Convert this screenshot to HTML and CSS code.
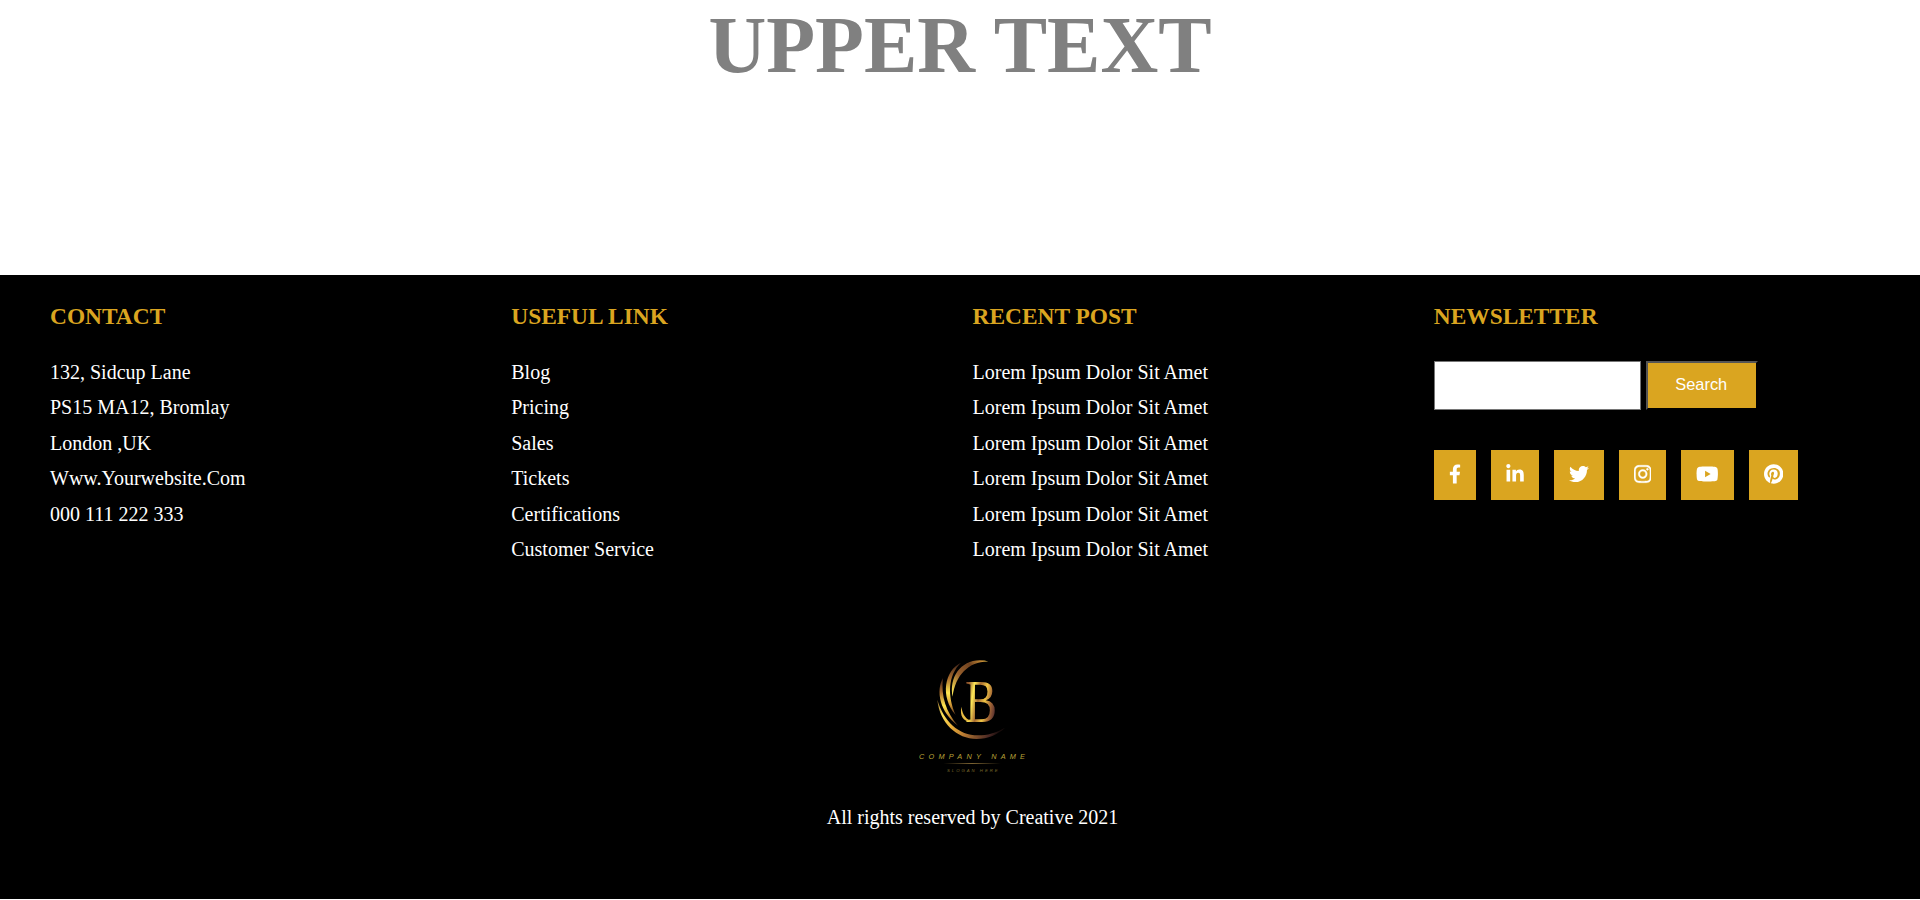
FILE: index.html
```html
<!DOCTYPE html>
<html lang="en">
<head>
<meta charset="utf-8">
<title>Footer</title>
<link rel="stylesheet" href="styles.css">
</head>
<body>
<header class="upper"><h1>UPPER TEXT</h1></header>
<footer class="footer">
  <div class="columns">
    <section class="column">
      <h3>CONTACT</h3>
      <ul>
        <li>132, Sidcup Lane</li>
        <li>PS15 MA12, Bromlay</li>
        <li>London ,UK</li>
        <li>Www.Yourwebsite.Com</li>
        <li>000 111 222 333</li>
      </ul>
    </section>
    <section class="column">
      <h3>USEFUL LINK</h3>
      <ul>
        <li>Blog</li>
        <li>Pricing</li>
        <li>Sales</li>
        <li>Tickets</li>
        <li>Certifications</li>
        <li>Customer Service</li>
      </ul>
    </section>
    <section class="column">
      <h3>RECENT POST</h3>
      <ul>
        <li>Lorem Ipsum Dolor Sit Amet</li>
        <li>Lorem Ipsum Dolor Sit Amet</li>
        <li>Lorem Ipsum Dolor Sit Amet</li>
        <li>Lorem Ipsum Dolor Sit Amet</li>
        <li>Lorem Ipsum Dolor Sit Amet</li>
        <li>Lorem Ipsum Dolor Sit Amet</li>
      </ul>
    </section>
    <section class="column">
      <h3>NEWSLETTER</h3>
      <form class="search">
        <input class="search-field" type="text" aria-label="Search">
        <button class="search-button" type="button">Search</button>
      </form>
      <div class="social">
        <a class="facebook"><svg viewBox="0 0 320 512"><path d="M279.14 288l14.22-92.66h-88.91v-60.13c0-25.35 12.42-50.06 52.24-50.06h40.42V6.26S260.43 0 225.36 0c-73.22 0-121.08 44.38-121.08 124.72v70.62H22.89V288h81.39v224h100.17V288z"/></svg></a>
        <a class="linkedin"><svg viewBox="0 0 448 512"><path d="M100.28 448H7.4V148.9h92.88zM53.79 108.1C24.09 108.1 0 83.5 0 53.8a53.79 53.79 0 0 1 107.58 0c0 29.7-24.1 54.3-53.79 54.3zM447.9 448h-92.68V302.4c0-34.7-.7-79.2-48.29-79.2-48.29 0-55.69 37.7-55.69 76.7V448h-92.78V148.9h89.08v40.8h1.3c12.4-23.5 42.69-48.3 87.88-48.3 94 0 111.28 61.9 111.28 142.3V448z"/></svg></a>
        <a class="twitter"><svg viewBox="0 0 512 512"><path d="M459.37 151.716c.325 4.548.325 9.097.325 13.645 0 138.72-105.583 298.558-298.558 298.558-59.452 0-114.68-17.219-161.137-47.106 8.447.974 16.568 1.299 25.34 1.299 49.055 0 94.213-16.568 130.274-44.832-46.132-.975-84.792-31.188-98.112-72.772 6.498.974 12.995 1.624 19.818 1.624 9.421 0 18.843-1.3 27.614-3.573-48.081-9.747-84.143-51.98-84.143-102.985v-1.299c13.969 7.797 30.214 12.67 47.431 13.319-28.264-18.843-46.781-51.005-46.781-87.391 0-19.492 5.197-37.36 14.294-52.954 51.655 63.675 129.3 105.258 216.365 109.807-1.624-7.797-2.599-15.918-2.599-24.04 0-57.828 46.782-104.934 104.934-104.934 30.213 0 57.502 12.67 76.67 33.137 23.715-4.548 46.456-13.32 66.599-25.34-7.798 24.366-24.366 44.833-46.132 57.827 21.117-2.273 41.584-8.122 60.426-16.243-14.292 20.791-32.161 39.308-52.628 54.253z"/></svg></a>
        <a class="instagram"><svg viewBox="0 0 448 512"><path d="M224.1 141c-63.6 0-114.9 51.3-114.9 114.9s51.3 114.9 114.9 114.9S339 319.5 339 255.9 287.7 141 224.1 141zm0 189.6c-41.1 0-74.7-33.5-74.7-74.7s33.5-74.7 74.7-74.7 74.7 33.5 74.7 74.7-33.6 74.7-74.7 74.7zm146.4-194.3c0 14.9-12 26.8-26.8 26.8-14.9 0-26.8-12-26.8-26.8s12-26.8 26.8-26.8 26.8 12 26.8 26.8zm76.1 27.2c-1.7-35.9-9.9-67.7-36.2-93.9-26.2-26.2-58-34.4-93.9-36.2-37-2.1-147.9-2.1-184.9 0-35.8 1.7-67.6 9.9-93.9 36.1s-34.4 58-36.2 93.9c-2.1 37-2.1 147.9 0 184.9 1.7 35.9 9.9 67.7 36.2 93.9s58 34.4 93.9 36.2c37 2.1 147.9 2.1 184.9 0 35.9-1.7 67.7-9.9 93.9-36.2 26.2-26.2 34.4-58 36.2-93.9 2.1-37 2.1-147.8 0-184.8zM398.8 388c-7.8 19.6-22.9 34.7-42.6 42.6-29.5 11.7-99.5 9-132.1 9s-102.7 2.6-132.1-9c-19.6-7.8-34.7-22.9-42.6-42.6-11.7-29.5-9-99.5-9-132.1s-2.6-102.7 9-132.1c7.8-19.6 22.9-34.7 42.6-42.6 29.5-11.7 99.5-9 132.1-9s102.7-2.6 132.1 9c19.6 7.8 34.7 22.9 42.6 42.6 11.7 29.5 9 99.5 9 132.1s2.7 102.7-9 132.1z"/></svg></a>
        <a class="youtube"><svg viewBox="0 0 576 512"><path d="M549.655 124.083c-6.281-23.65-24.787-42.276-48.284-48.597C458.781 64 288 64 288 64S117.22 64 74.629 75.486c-23.497 6.322-42.003 24.947-48.284 48.597-11.412 42.867-11.412 132.305-11.412 132.305s0 89.438 11.412 132.305c6.281 23.65 24.787 41.5 48.284 47.821C117.22 448 288 448 288 448s170.78 0 213.371-11.486c23.497-6.321 42.003-24.171 48.284-47.821 11.412-42.867 11.412-132.305 11.412-132.305s0-89.438-11.412-132.305zm-317.51 213.508V175.185l142.739 81.205-142.739 81.201z"/></svg></a>
        <a class="pinterest"><svg viewBox="0 0 496 512"><path d="M496 256c0 137-111 248-248 248-25.6 0-50.2-3.9-73.4-11.1 10.1-16.5 25.2-43.5 30.8-65 3-11.6 15.4-59 15.4-59 8.1 15.4 31.7 28.5 56.8 28.5 74.8 0 128.7-68.8 128.7-154.3 0-81.9-66.9-143.2-152.9-143.2-107 0-163.9 71.8-163.9 150.1 0 36.4 19.4 81.7 50.3 96.1 4.7 2.2 7.2 1.2 8.3-3.3.8-3.4 5-20.3 6.9-28.1.6-2.5.3-4.7-1.7-7.1-10.1-12.5-18.3-35.3-18.3-56.6 0-54.7 41.4-107.6 112-107.6 60.9 0 103.6 41.5 103.6 100.9 0 67.1-33.9 113.6-78 113.6-24.3 0-42.6-20.1-36.7-44.8 7-29.5 20.5-61.3 20.5-82.6 0-19-10.2-34.9-31.4-34.9-24.9 0-44.9 25.7-44.9 60.2 0 22 7.4 36.8 7.4 36.8s-24.5 103.8-29 123.2c-5 21.4-3 51.6-.9 71.2C65.4 450.9 0 361.1 0 256 0 119 111 8 248 8s248 111 248 248z"/></svg></a>
      </div>
    </section>
  </div>
  <div class="bottom">
    <svg class="logo" viewBox="0 0 450 450">
      <defs>
        <linearGradient id="gold" gradientUnits="userSpaceOnUse" x1="110" y1="150" x2="310" y2="250">
          <stop offset="0" stop-color="#70451f"/><stop offset=".22" stop-color="#ffe45a"/><stop offset=".4" stop-color="#e9ad38"/><stop offset=".6" stop-color="#b67832"/><stop offset=".9" stop-color="#4a2824"/><stop offset="1" stop-color="#180c0b"/>
        </linearGradient>
        <linearGradient id="arc" gradientUnits="userSpaceOnUse" x1="155" y1="160" x2="270" y2="62">
          <stop offset="0" stop-color="#ffeb55"/><stop offset=".35" stop-color="#98602d"/><stop offset=".65" stop-color="#70421f"/><stop offset=".88" stop-color="#c88d35"/><stop offset="1" stop-color="#ffea60"/>
        </linearGradient>
        <linearGradient id="feather" x1="0" y1="0" x2="0" y2="1">
          <stop offset="0" stop-color="#3c2018"/><stop offset=".3" stop-color="#a86c2d"/><stop offset=".58" stop-color="#ffe750"/><stop offset=".8" stop-color="#d49a35"/><stop offset="1" stop-color="#5b321d"/>
        </linearGradient>
        <linearGradient id="letter" gradientUnits="userSpaceOnUse" x1="5" y1="-75" x2="118" y2="-50">
          <stop offset="0" stop-color="#8e542b"/><stop offset=".2" stop-color="#ffe957"/><stop offset=".4" stop-color="#a66a30"/><stop offset=".62" stop-color="#f1c646"/><stop offset=".82" stop-color="#a46734"/><stop offset="1" stop-color="#5e3430"/>
        </linearGradient>
        <linearGradient id="rule"><stop offset="0" stop-color="#000"/><stop offset=".5" stop-color="#a58442"/><stop offset="1" stop-color="#000"/></linearGradient>
      </defs>
      <path fill="url(#gold)" d="M112 179C119 250 171 296 230 297C264 297 294 283 315 263C288 279 262 286 234 286C176 286 131 244 112 179Z"/>
      <path fill="url(#feather)" d="M129 114C107 151 119 217 174 257C139 218 122 169 129 114Z"/>
      <path fill="url(#feather)" d="M183 68C134 91 119 169 167 225C142 168 143 106 183 68Z"/>
      <path fill="url(#arc)" d="M158 170C145 105 193 45 268 65C210 62 166 104 158 170Z"/>
      <text class="monogram" transform="translate(195 245) scale(.78 1)" fill="url(#letter)">B</text>
      <path fill="#e9bd43" d="M184 200C179 229 190 246 216 244C199 238 188 226 184 200Z"/>
      <text class="company" x="57" y="357" textLength="318">COMPANY NAME</text>
      <path fill="url(#rule)" d="M130 370H302V372H130Z"/>
      <text class="slogan" x="141" y="395" textLength="152">SLOGAN HERE</text>
    </svg>
    <p>All rights reserved by Creative 2021</p>
  </div>
</footer>
</body>
</html>
```
FILE: styles.css
```css
* { box-sizing: border-box; margin: 0; padding: 0; }
body {
  background: #fff;
  font-family: "Liberation Serif", "Times New Roman", serif;
  font-size: 20px;
}
.upper { height: 275px; text-align: center; }
.upper h1 { color: gray; font-size: 80px; line-height: 90px; }
.footer {
  height: 624px;
  padding: 28px 25px 0 50px;
  background: #000;
  color: #fff;
}
.columns { display: grid; grid-template-columns: repeat(4, 1fr); height: 337px; }
.column h3 {
  margin-bottom: 32px;
  color: goldenrod;
  font-size: 23.4px;
  line-height: 26px;
}
.column ul { margin-top: -0.2px; list-style: none; }
.column li { height: 35.5px; line-height: 23px; }
.search { display: flex; align-items: flex-start; gap: 5px; }
.search-field {
  width: 207px;
  height: 49px;
  border: 1px solid #767676;
  background: #fff;
}
.search-button {
  width: 112px;
  height: 49px;
  padding-right: 1px;
  padding-bottom: 2px;
  border: 2px solid;
  border-color: #555 #000 #000 #555;
  background: goldenrod;
  color: #fff;
  font: 16.4px "Liberation Sans", Arial, sans-serif;
}
.social { display: flex; gap: 15px; margin-top: 40px; }
.social a {
  display: block;
  height: 50px;
  padding: 14px 15px 16px;
  background: goldenrod;
}
.social svg { display: block; width: 100%; height: 20px; fill: #fff; }
.facebook { width: 42px; }
.linkedin { width: 48px; }
.twitter { width: 50px; }
.instagram { width: 47.5px; }
.instagram svg { stroke: #fff; stroke-width: 10px; }
.youtube { width: 52.5px; }
.pinterest { width: 49.4px; }
.bottom { display: flex; flex-direction: column; align-items: center; }
.logo { display: block; width: 150px; height: 150px; margin-right: -5px; }
.bottom p { margin-top: 16px; line-height: 23px; }
.monogram { font: 185px "Liberation Serif", serif; }
.company { fill: #b8a037; font: italic 22px "Liberation Sans", sans-serif; }
.slogan { fill: #77662a; font: italic 13px "Liberation Sans", sans-serif; }
```
